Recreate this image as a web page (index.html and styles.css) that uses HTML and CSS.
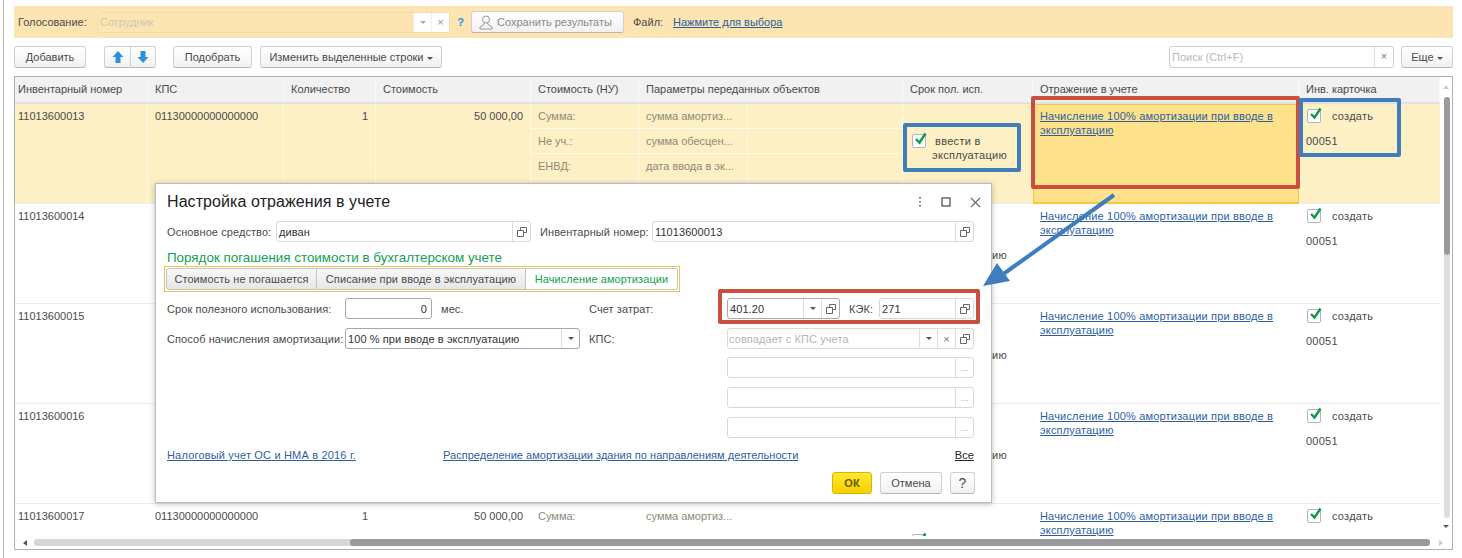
FILE: index.html
```html
<!DOCTYPE html>
<html lang="ru">
<head>
  <meta charset="UTF-8">
  <title>Настройка отражения в учете</title>
  <link rel="stylesheet" href="styles.css">
</head>
<body>
  <div class="page">
    <div class="frame">
      <!-- Голосование -->
      <div class="band">
        <span class="band-label">Голосование:</span>
        <div class="band-field">
          <span class="band-input">Сотрудник</span>
          <span class="band-btn"><i class="caret caret-light"></i></span>
          <span class="band-btn band-x">×</span>
        </div>
        <span class="band-help">?</span>
        <button class="btn band-save">
          <svg width="14" height="15" viewBox="0 0 14 15"><circle cx="7" cy="4.5" r="3.5" fill="none" stroke="#999"/><path d="M5.5 8 L5 9.500 L1 12 V14 H13 V12 L9 9.500 L8.500 8" fill="none" stroke="#999"/></svg>
          Сохранить результаты
        </button>
        <span class="band-file">Файл:</span>
        <a class="link band-link" href="#">Нажмите для выбора</a>
      </div>

      <!-- Панель команд -->
      <div class="toolbar">
        <button class="btn btn-add">Добавить</button>
        <div class="btn-pair">
          <button class="btn btn-arrow"><svg width="12" height="14" viewBox="0 0 12 14"><path d="M6 1 L11.500 7 H8.500 V13 H3.500 V7 H0.500 Z" fill="#2f8fd8"/></svg></button>
          <button class="btn btn-arrow"><svg width="12" height="14" viewBox="0 0 12 14"><path d="M6 13 L11.500 7 H8.500 V1 H3.500 V7 H0.500 Z" fill="#2f8fd8"/></svg></button>
        </div>
        <button class="btn btn-pick">Подобрать</button>
        <button class="btn btn-change">Изменить выделенные строки <i class="caret"></i></button>
        <div class="search">
          <span class="search-text">Поиск (Ctrl+F)</span>
          <span class="search-x">×</span>
        </div>
        <button class="btn btn-more">Еще <i class="caret"></i></button>
      </div>

      <!-- Таблица -->
      <div class="table">
        <div class="table-main">
          <div class="table-cols">
            <div class="thead">
              <div class="th">Инвентарный номер</div>
              <div class="th">КПС</div>
              <div class="th">Количество</div>
              <div class="th">Стоимость</div>
              <div class="th">Стоимость (НУ)</div>
              <div class="th th-wide">Параметры переданных объектов</div>
              <div class="th">Срок пол. исп.</div>
              <div class="th">Отражение в учете</div>
              <div class="th">Инв. карточка</div>
            </div>

            <div class="row row-current">
              <div class="td td-first">11013600013</div>
              <div class="td">01130000000000000</div>
              <div class="td td-num">1</div>
              <div class="td td-num">50 000,00</div>
              <div class="td-stack muted"><span>Сумма:</span><span>Не уч.:</span><span>ЕНВД:</span><span></span></div>
              <div class="td-stack muted"><span>сумма амортиз...</span><span>сумма обесцен...</span><span>дата ввода в эк...</span><span></span></div>
              <div class="td-stack"><span></span><span></span><span></span><span></span></div>
              <div class="td-term"><i class="check"><svg width="15" height="15" viewBox="0 0 15 15"><path d="M3 7 L6.500 10.500 L12.500 1.500" fill="none" stroke="#0e9a4e" stroke-width="2.400"/></svg></i><span class="term-text">ввести в эксплуатацию</span></div>
              <div class="td td-link td-selected"><a class="link" href="#">Начисление 100% амортизации при вводе в эксплуатацию</a></div>
              <div class="td-card"><div class="card-top"><i class="check"><svg width="15" height="15" viewBox="0 0 15 15"><path d="M3 7 L6.500 10.500 L12.500 1.500" fill="none" stroke="#0e9a4e" stroke-width="2.400"/></svg></i>создать</div><div class="card-num">00051</div></div>
            </div>

            <div class="row">
              <div class="td td-first">11013600014</div>
              <div class="td-under"></div>
              <div class="td-term"><i class="check"><svg width="15" height="15" viewBox="0 0 15 15"><path d="M3 7 L6.500 10.500 L12.500 1.500" fill="none" stroke="#0e9a4e" stroke-width="2.400"/></svg></i><span class="term-text">ввести в эксплуатацию</span></div>
              <div class="td td-link"><a class="link" href="#">Начисление 100% амортизации при вводе в эксплуатацию</a></div>
              <div class="td-card"><div class="card-top"><i class="check"><svg width="15" height="15" viewBox="0 0 15 15"><path d="M3 7 L6.500 10.500 L12.500 1.500" fill="none" stroke="#0e9a4e" stroke-width="2.400"/></svg></i>создать</div><div class="card-num">00051</div></div>
            </div>

            <div class="row">
              <div class="td td-first">11013600015</div>
              <div class="td-under"></div>
              <div class="td-term"><i class="check"><svg width="15" height="15" viewBox="0 0 15 15"><path d="M3 7 L6.500 10.500 L12.500 1.500" fill="none" stroke="#0e9a4e" stroke-width="2.400"/></svg></i><span class="term-text">ввести в эксплуатацию</span></div>
              <div class="td td-link"><a class="link" href="#">Начисление 100% амортизации при вводе в эксплуатацию</a></div>
              <div class="td-card"><div class="card-top"><i class="check"><svg width="15" height="15" viewBox="0 0 15 15"><path d="M3 7 L6.500 10.500 L12.500 1.500" fill="none" stroke="#0e9a4e" stroke-width="2.400"/></svg></i>создать</div><div class="card-num">00051</div></div>
            </div>

            <div class="row">
              <div class="td td-first">11013600016</div>
              <div class="td-under"></div>
              <div class="td-term"><i class="check"><svg width="15" height="15" viewBox="0 0 15 15"><path d="M3 7 L6.500 10.500 L12.500 1.500" fill="none" stroke="#0e9a4e" stroke-width="2.400"/></svg></i><span class="term-text">ввести в эксплуатацию</span></div>
              <div class="td td-link"><a class="link" href="#">Начисление 100% амортизации при вводе в эксплуатацию</a></div>
              <div class="td-card"><div class="card-top"><i class="check"><svg width="15" height="15" viewBox="0 0 15 15"><path d="M3 7 L6.500 10.500 L12.500 1.500" fill="none" stroke="#0e9a4e" stroke-width="2.400"/></svg></i>создать</div><div class="card-num">00051</div></div>
            </div>

            <div class="row">
              <div class="td td-first">11013600017</div>
              <div class="td">01130000000000000</div>
              <div class="td td-num">1</div>
              <div class="td td-num">50 000,00</div>
              <div class="td-stack muted"><span>Сумма:</span><span>Не уч.:</span><span></span><span></span></div>
              <div class="td-stack muted"><span>сумма амортиз...</span><span>сумма обесцен...</span><span></span><span></span></div>
              <div class="td-stack"><span></span><span></span><span></span><span></span></div>
              <div class="td-term"><i class="check"><svg width="15" height="15" viewBox="0 0 15 15"><path d="M3 7 L6.500 10.500 L12.500 1.500" fill="none" stroke="#0e9a4e" stroke-width="2.400"/></svg></i></div>
              <div class="td td-link"><a class="link" href="#">Начисление 100% амортизации при вводе в эксплуатацию</a></div>
              <div class="td-card"><div class="card-top"><i class="check"><svg width="15" height="15" viewBox="0 0 15 15"><path d="M3 7 L6.500 10.500 L12.500 1.500" fill="none" stroke="#0e9a4e" stroke-width="2.400"/></svg></i>создать</div><div class="card-num">00051</div></div>
            </div>
          </div>

          <div class="vscroll">
            <div class="vscroll-end"><i class="caret caret-up"></i></div>
            <div class="vscroll-track"><div class="vscroll-thumb"></div></div>
            <div class="vscroll-end"><i class="caret caret-dark"></i></div>
          </div>
        </div>

        <div class="hscroll">
          <div class="hscroll-end"><i class="caret-left"></i></div>
          <div class="hscroll-track"><div class="hscroll-thumb"></div></div>
          <div class="hscroll-end"><i class="caret-right"></i></div>
        </div>
      </div>
    </div>

    <!-- Диалог -->
    <div class="dialog">
      <div class="dialog-head">
        <span class="dialog-title">Настройка отражения в учете</span>
        <div class="dialog-tools">
          <svg width="4" height="12" viewBox="0 0 4 12"><path d="M2 1 V2.500 M2 5 V6.500 M2 9 V10.500" stroke="#777" stroke-width="2"/></svg>
          <svg width="10" height="10" viewBox="0 0 10 10"><rect x="1" y="1" width="8" height="8" fill="none" stroke="#444" stroke-width="1.200"/></svg>
          <svg width="11" height="11" viewBox="0 0 11 11"><path d="M1 1 L10 10 M10 1 L1 10" stroke="#666" stroke-width="1.100"/></svg>
        </div>
      </div>

      <div class="form-top">
        <label class="lbl">Основное средство:</label>
        <div class="field"><span class="field-text">диван</span><span class="field-btn"><svg class="open-icon" width="10" height="10" viewBox="0 0 10 10"><path d="M3.500 3 V0.500 H9.500 V5.500 H6.500 M0.500 3.500 H6.500 V9.500 H0.500 Z" fill="none" stroke="#666"/></svg></span></div>
        <label class="lbl">Инвентарный номер:</label>
        <div class="field"><span class="field-text">11013600013</span><span class="field-btn"><svg class="open-icon" width="10" height="10" viewBox="0 0 10 10"><path d="M3.500 3 V0.500 H9.500 V5.500 H6.500 M0.500 3.500 H6.500 V9.500 H0.500 Z" fill="none" stroke="#666"/></svg></span></div>
      </div>

      <div class="section-title">Порядок погашения стоимости в бухгалтерском учете</div>

      <div class="tabs">
        <span class="tab tab-1">Стоимость не погашается</span>
        <span class="tab tab-2">Списание при вводе в эксплуатацию</span>
        <span class="tab tab-3 tab-active">Начисление амортизации</span>
      </div>

      <div class="form-grid">
        <label class="lbl">Срок полезного использования:</label>
        <div class="term-field">
          <div class="field field-strong field-months"><span class="field-text field-right">0</span></div>
          <span class="lbl">мес.</span>
        </div>
        <span></span>
        <label class="lbl">Счет затрат:</label>
        <div class="cost-fields">
          <div class="field field-strong field-account">
            <span class="field-text">401.20</span>
            <span class="field-btn"><i class="caret caret-dark"></i></span>
            <span class="field-btn"><svg class="open-icon" width="10" height="10" viewBox="0 0 10 10"><path d="M3.500 3 V0.500 H9.500 V5.500 H6.500 M0.500 3.500 H6.500 V9.500 H0.500 Z" fill="none" stroke="#666"/></svg></span>
          </div>
          <label class="lbl lbl-kek">КЭК:</label>
          <div class="field field-kek"><span class="field-text">271</span><span class="field-btn"><svg class="open-icon" width="10" height="10" viewBox="0 0 10 10"><path d="M3.500 3 V0.500 H9.500 V5.500 H6.500 M0.500 3.500 H6.500 V9.500 H0.500 Z" fill="none" stroke="#666"/></svg></span></div>
        </div>

        <label class="lbl">Способ начисления амортизации:</label>
        <div class="field field-strong"><span class="field-text">100 % при вводе в эксплуатацию</span><span class="field-btn"><i class="caret caret-dark"></i></span></div>
        <span></span>
        <label class="lbl">КПС:</label>
        <div class="field field-mid">
          <span class="field-text field-hint">совпадает с КПС учета</span>
          <span class="field-btn"><i class="caret caret-dark"></i></span>
          <span class="field-btn field-x">×</span>
          <span class="field-btn"><svg class="open-icon" width="10" height="10" viewBox="0 0 10 10"><path d="M3.500 3 V0.500 H9.500 V5.500 H6.500 M0.500 3.500 H6.500 V9.500 H0.500 Z" fill="none" stroke="#666"/></svg></span>
        </div>
      </div>

      <div class="form-extra">
        <div class="field"><span class="field-text"></span><span class="field-btn field-dots">...</span></div>
        <div class="field"><span class="field-text"></span><span class="field-btn field-dots">...</span></div>
        <div class="field"><span class="field-text"></span><span class="field-btn field-dots">...</span></div>
      </div>

      <div class="links">
        <a class="link link-tax" href="#">Налоговый учет ОС и НМА в 2016 г.</a>
        <a class="link link-share" href="#">Распределение амортизации здания по направлениям деятельности</a>
        <a class="link-all" href="#">Все</a>
      </div>

      <div class="dialog-actions">
        <button class="btn btn-ok">ОК</button>
        <button class="btn btn-cancel">Отмена</button>
        <button class="btn btn-q">?</button>
      </div>
    </div>

    <!-- Пометки поверх снимка -->
    <div class="mark mark-red mark-reflect"></div>
    <div class="mark mark-blue mark-card"></div>
    <div class="mark mark-blue mark-term"></div>
    <div class="mark mark-red mark-cost"></div>
    <svg class="arrow" width="145" height="105" viewBox="0 0 145 105">
      <path d="M139 5 L20 90" stroke="#3f7dbd" stroke-width="4" fill="none"/>
      <path d="M8 96 L22 73 L35 91 Z" fill="#3f7dbd"/>
    </svg>
  </div>
</body>
</html>
```

FILE: styles.css
```css
:root {
  --band: #fde5b3;
  --text: #4a4a4a;
  --muted: #8d8a78;
  --link: #2d5f9f;
  --line: #cfcfcf;
  --red: #c9503f;
  --blue: #3f7dbd;
}

* {
  box-sizing: border-box;
}

body {
  margin: 0;
  font-family: "Liberation Sans", Arial, sans-serif;
  font-size: 11px;
  color: var(--text);
  background: #fff;
}

.page {
  position: relative;
  width: 1462px;
  height: 558px;
  overflow: hidden;
}

.frame {
  margin-left: 3px;
  height: 558px;
  border-left: 1px solid #b5b5b5;
  padding: 6px 9px 0 10px;
}

.link {
  color: var(--link);
  text-decoration: underline;
  letter-spacing: 0.18px;
}

.btn {
  font: inherit;
  color: var(--text);
  height: 22px;
  padding: 0;
  border: 1px solid #d0d0d0;
  border-bottom-color: #b5b5b5;
  border-radius: 3px;
  background: linear-gradient(#fff, #f1f1f1);
}

.caret {
  display: inline-block;
  width: 0;
  height: 0;
  border-left: 3px solid transparent;
  border-right: 3px solid transparent;
  border-top: 3px solid #555;
  vertical-align: middle;
}

.caret-light {
  border-top-color: #aaa;
}

.caret-dark {
  border-top-color: #555;
}

.caret-up {
  border-top: 0;
  border-bottom: 4px solid #ccc;
}

/* Голосование */
.band {
  display: flex;
  align-items: center;
  height: 32px;
  padding-left: 4px;
  background: var(--band);
}

.band-label {
  width: 79px;
}

.band-field {
  display: flex;
  width: 353px;
  height: 21px;
  border: 1px solid #f3dca9;
  border-radius: 3px;
}

.band-input {
  flex: 1;
  padding: 3px 2px;
  color: #cdc6ae;
  background: var(--band);
}

.band-btn {
  display: flex;
  align-items: center;
  justify-content: center;
  width: 18px;
  background: #fff;
  border-left: 1px solid #eee;
  color: #999;
}

.band-help {
  width: 21px;
  text-align: center;
  font-weight: bold;
  color: #2f8fd8;
}

.band-save {
  display: flex;
  align-items: center;
  gap: 4px;
  width: 153px;
  padding-left: 7px;
  color: #8a8a8a;
  white-space: nowrap;
}

.band-file {
  margin-left: 9px;
  width: 40px;
}

.band-link {
  letter-spacing: 0;
}

/* Панель команд */
.toolbar {
  display: flex;
  align-items: center;
  height: 22px;
  margin-top: 8px;
}

.btn-add {
  width: 72px;
}

.btn-pair {
  display: flex;
  margin-left: 18px;
}

.btn-arrow {
  display: flex;
  align-items: center;
  justify-content: center;
  width: 26px;
}

.btn-arrow:first-child {
  border-radius: 3px 0 0 3px;
  border-right: 0;
}

.btn-arrow:last-child {
  border-radius: 0 3px 3px 0;
}

.btn-pick {
  width: 79px;
  margin-left: 17px;
}

.btn-change {
  width: 182px;
  margin-left: 8px;
}

.search {
  display: flex;
  width: 225px;
  height: 22px;
  margin-left: auto;
  border: 1px solid #d0d0d0;
  border-radius: 3px;
}

.search-text {
  flex: 1;
  padding: 4px 2px;
  color: #b9b9b9;
}

.search-x {
  width: 19px;
  text-align: center;
  line-height: 19px;
  border-left: 1px solid #ddd;
  color: #777;
}

.btn-more {
  width: 52px;
  margin-left: 7px;
}

/* Таблица */
.table {
  display: flex;
  flex-direction: column;
  height: 474px;
  margin-top: 8px;
  border: 1px solid #b0b0b0;
}

.table-main {
  display: flex;
  height: 459px;
}

.table-cols {
  width: 1425px;
  overflow: hidden;
}

.thead,
.row {
  display: grid;
  grid-template-columns: 133px 136px 92px 155px 108px 109px 155px 130px 266px 141px;
}

.thead {
  height: 27px;
  background: #f1f1f1;
  border-bottom: 2px solid #e2e2e2;
}

.th {
  padding: 6px 7px 0;
  border-right: 1px solid #fafafa;
  white-space: nowrap;
}

.th:first-child {
  padding-left: 3px;
}

.th-wide {
  grid-column: span 2;
}

.row {
  height: 100px;
  border-bottom: 1px solid #ececec;
}

.row-current {
  background: #fdf0c5;
}

.td {
  padding: 5px 7px;
  line-height: 14px;
  border-right: 1px solid rgba(255, 255, 255, 0.6);
}

.td-first {
  padding-left: 3px;
}

.td-num {
  text-align: right;
}

/* строки 2-4: эти колонки закрыты диалогом */
.td-under {
  grid-column: span 6;
}

.td-stack {
  display: grid;
  grid-template-rows: repeat(4, 25px);
  border-right: 1px solid rgba(255, 255, 255, 0.6);
}

.td-stack span {
  padding: 5px 7px;
  line-height: 14px;
  border-bottom: 1px solid rgba(255, 255, 255, 0.6);
  white-space: nowrap;
}

.muted {
  color: var(--muted);
}

.td-term {
  display: flex;
  gap: 6px;
  padding: 30px 0 0 9px;
  line-height: 14px;
  letter-spacing: 0.3px;
}

.term-text {
  width: 76px;
  text-indent: 3px;
}

.check {
  flex: none;
  position: relative;
  display: inline-block;
  width: 14px;
  height: 14px;
  background: #fff;
  border: 1px solid #b5b5b5;
  border-radius: 2px;
}

.check svg {
  position: absolute;
  left: 0;
  top: -3px;
}

.td-selected {
  padding: 4px 6px;
  background: #fee28b;
  border: 1px solid #f2c93f;
  border-bottom-width: 2px;
}

.td-card {
  padding: 4px 8px;
  letter-spacing: 0.25px;
}

.card-top {
  display: flex;
  align-items: center;
  gap: 11px;
  height: 16px;
}

.card-num {
  margin-top: 11px;
  margin-left: -1px;
}

.vscroll {
  display: flex;
  flex-direction: column;
  width: 12px;
}

.vscroll-end {
  display: flex;
  align-items: center;
  justify-content: center;
  height: 20px;
}

.vscroll-track {
  width: 6px;
  height: 421px;
  margin: 0 0 -2px 4px;
  border-radius: 3px;
  background: #dedede;
}

.vscroll-thumb {
  height: 158px;
  border-radius: 3px;
  background: #9a9a9a;
}

.hscroll {
  display: flex;
  align-items: center;
  height: 13px;
}

.hscroll-end {
  display: flex;
  align-items: center;
  justify-content: center;
  width: 19px;
}

.hscroll-end:last-child {
  width: 22px;
}

.caret-left,
.caret-right {
  width: 0;
  height: 0;
  border-top: 3px solid transparent;
  border-bottom: 3px solid transparent;
}

.caret-left {
  border-right: 4px solid #555;
}

.caret-right {
  border-left: 4px solid #ccc;
}

.hscroll-track {
  flex: 1;
  height: 7px;
  border-radius: 3px;
  background: #d6d6d6;
}

.hscroll-thumb {
  height: 7px;
  margin-left: 316px;
  border-radius: 3px;
  background: #9a9a9a;
}

/* Диалог */
.dialog {
  position: absolute;
  left: 155px;
  top: 183px;
  width: 837px;
  height: 320px;
  padding: 0 17px 0 11px;
  background: #fff;
  border: 1px solid #bbb;
  box-shadow: 0 1px 6px rgba(0, 0, 0, 0.25);
  letter-spacing: 0.08px;
}

.dialog-head {
  display: flex;
  align-items: center;
  justify-content: space-between;
  height: 37px;
  padding-bottom: 1px;
}

.dialog-title {
  font-size: 16px;
  color: #222;
}

.dialog-tools {
  display: flex;
  align-items: center;
  gap: 19px;
  margin-right: -7px;
}

.lbl {
  white-space: nowrap;
}

.field {
  display: flex;
  height: 21px;
  border: 1px solid #d8d8d8;
  border-radius: 3px;
  color: #333;
  background: #fff;
}

.field-strong {
  border-color: #a8a8a8;
}

.field-text {
  flex: 1;
  min-width: 0;
  padding: 3px 2px;
  line-height: 14px;
}

.field-right {
  padding-right: 4px;
  text-align: right;
}

.field-hint {
  color: #b5b5b5;
}

.field-btn {
  flex: none;
  display: flex;
  align-items: center;
  justify-content: center;
  width: 18px;
  border-left: 1px solid #ddd;
}

.field-x {
  color: #777;
}

.field-dots {
  color: #aaa;
  font-size: 9px;
}

.form-top {
  display: grid;
  grid-template-columns: 109px 255px 9px 112px 322px;
  align-items: center;
}

.form-top .lbl:nth-of-type(2) {
  grid-column: 4;
}

.section-title {
  height: 24px;
  padding-top: 7px;
  line-height: 17px;
  font-size: 13.4px;
  letter-spacing: 0;
  color: #12a150;
}

.tabs {
  display: flex;
  width: 516px;
  height: 26px;
  margin-left: -3px;
  padding: 1px;
  border: 1px solid #e6c64c;
}

.tab {
  display: flex;
  align-items: center;
  justify-content: center;
  border: 1px solid #c4c4c4;
  background: linear-gradient(#f8f8f8, #e6e6e6);
}

.tab-1 {
  width: 151px;
  border-radius: 3px 0 0 3px;
}

.tab-2 {
  width: 209px;
  border-left: 0;
}

.tab-3 {
  width: 152px;
  border-left: 0;
  border-radius: 0 3px 3px 0;
}

.tab-active {
  color: #12a150;
  background: #fff;
}

.form-grid {
  display: grid;
  grid-template-columns: 178px 235px 9px 138px 247px;
  grid-auto-rows: 21px;
  row-gap: 9px;
  align-items: center;
  margin-top: 6px;
}

.term-field {
  display: flex;
  align-items: center;
  gap: 9px;
}

.field-months {
  width: 87px;
}

.cost-fields {
  display: flex;
  align-items: center;
}

.field-account {
  width: 113px;
}

.field-account .field-text,
.field-kek .field-text {
  padding-left: 2px;
}

.lbl-kek {
  margin-left: 9px;
}

.field-kek {
  width: 95px;
  margin-left: auto;
}

.field-mid .field-hint {
  padding-left: 1px;
}

.form-extra {
  display: flex;
  flex-direction: column;
  gap: 9px;
  width: 247px;
  margin: 8px 0 0 560px;
}

.form-extra .field {
  height: 21px;
}

.links {
  display: flex;
  height: 18px;
  margin-top: 8px;
  line-height: 18px;
}

.link-tax {
  width: 276px;
}

.link-share {
  letter-spacing: 0.03px;
}

.link-all {
  margin-left: auto;
  color: #222;
  text-decoration: underline;
}

.dialog-actions {
  display: flex;
  justify-content: flex-end;
  gap: 8px;
  margin-top: 8px;
  margin-right: -1px;
}

.btn-ok {
  width: 40px;
  font-weight: bold;
  color: #6a5a00;
  border-color: #d8b400;
  background: linear-gradient(#ffea2e, #f6d000);
}

.btn-cancel {
  width: 62px;
}

.btn-q {
  width: 25px;
  font-size: 14px;
}

/* Пометки */
.mark {
  position: absolute;
  border-radius: 2px;
}

.mark-red {
  border: 4px solid var(--red);
}

.mark-blue {
  border: 4px solid var(--blue);
}

.mark-reflect {
  left: 1031px;
  top: 96px;
  width: 269px;
  height: 93px;
}

.mark-card {
  left: 1299px;
  top: 98px;
  width: 102px;
  height: 59px;
}

.mark-term {
  left: 903px;
  top: 123px;
  width: 118px;
  height: 49px;
}

.mark-cost {
  left: 718px;
  top: 289px;
  width: 262px;
  height: 35px;
}

.arrow {
  position: absolute;
  left: 975px;
  top: 190px;
}
```
